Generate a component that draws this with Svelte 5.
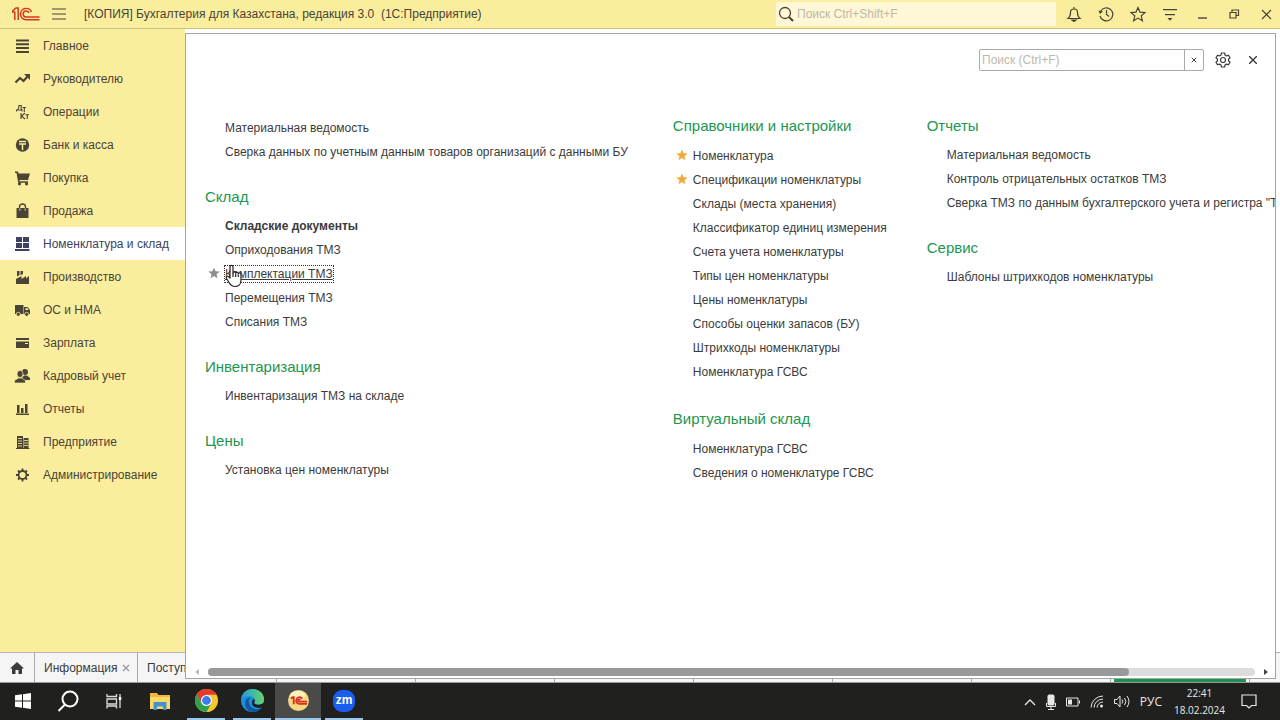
<script lang="ts">
  type Item = { text: string; bold?: boolean; star?: boolean; hover?: boolean };
  type Group = { title?: string; items: Item[] };

  const sections = [
    { name: 'Главное', icon: '<path d="M2 1.500h13v2H2zM2 5.300h13v2H2zM2 9.100h13v2H2zM2 13h13v2H2z"/>' },
    { name: 'Руководителю', icon: '<path d="M1.500 11.500L6 7l3.500 3L14 5" fill="none" stroke="currentColor" stroke-width="2.200"/><path d="M10 3h6v6z"/>' },
    { name: 'Операции', icon: '<g fill="none" stroke="currentColor" stroke-width="1.100"><path d="M2.500 7.500V6h5.500v1.500M3.500 6Q5 4 5 1.500h2.200V6M8.500 3.500h3.500M10.300 3.500V8" /><path d="M7 9v6M11 9L7.500 12 11 15M11.500 10.700h3.500M13.300 10.700V15"/></g>' },
    { name: 'Банк и касса', icon: '<circle cx="8.500" cy="8" r="6.700"/><path d="M5 4.500h7M5 7h7M8.500 7v6" stroke="#fbed9e" stroke-width="1.500"/>' },
    { name: 'Покупка', icon: '<path d="M1 1.500h3l.6 2H16L14 10H5.300l.3 1.200H14v1.500H4.200L2.500 3H1z"/><circle cx="5.500" cy="13.800" r="1.600"/><circle cx="12.500" cy="13.800" r="1.600"/>' },
    { name: 'Продажа', icon: '<path d="M2.500 5h12v10h-12z"/><path d="M5.500 8V4a3 3 0 0 1 6 0v4" fill="none" stroke="currentColor" stroke-width="1.300"/><path d="M5.800 5.500v2M11.200 5.500v2" stroke="#fbed9e"/>' },
    { name: 'Номенклатура и склад', icon: '<path d="M2 1h6v5H2zM9 1h6v5H9zM2 7h6v5H2zM9 7h6v5H9zM1 13h14.500v2H1z"/>', active: true },
    { name: 'Производство', icon: '<path d="M2 15V10l5.500-3v3L12 7v2.500L15 7v8zM3 2h2.500v4L3 7.500zM6.500 2H9v3L6.500 6.300z"/>' },
    { name: 'ОС и НМА', icon: '<path d="M1 3h8.500v9H1zM10 5h3.500L16 8v4h-6z"/><circle cx="4.300" cy="12.300" r="2" stroke="#fbed9e" stroke-width=".8"/><circle cx="12.700" cy="12.300" r="2" stroke="#fbed9e" stroke-width=".8"/><path d="M11.500 6.300h2l1.200 1.800h-3.200z" fill="#fbed9e"/>' },
    { name: 'Зарплата', icon: '<path d="M2 3h13v2H2zM2 6.500h13V13H2z"/><path d="M11 8.500h3" stroke="#fbed9e"/>' },
    { name: 'Кадровый учет', icon: '<circle cx="11" cy="4" r="3"/><path d="M8 10l2-2.500h3l3 2.500v2H9z"/><g stroke="#fbed9e" stroke-width=".7"><ellipse cx="6" cy="6" rx="3" ry="3.600"/><path d="M.5 15v-2.500L4.500 10h3l4 2.500V15z"/></g>' },
    { name: 'Отчеты', icon: '<path d="M3 4h2.500v8H3zM7 7h2.500v5H7zM11 3h2.500v9H11zM2 12.500h13V14H2z"/>' },
    { name: 'Предприятие', icon: '<path d="M3 2h6v12H3zM9.500 4h5v10h-5zM2 14h13.500v1H2z"/><path d="M4 4.500h4M4 7h4M4 9.500h4M4 12h4M10 6.500h4M10 9h4M10 11.500h4" stroke="#fbed9e" stroke-width=".8"/>' },
    { name: 'Администрирование', icon: '<circle cx="8.500" cy="8" r="4" fill="none" stroke="currentColor" stroke-width="1.800"/><path d="M8.500 1.500v3M8.500 11.500v3M2 8h3M12 8h3M4 3.500l2 2M11 10.500l2 2M13 3.500l-2 2M6 10.500l-2 2" stroke="currentColor" stroke-width="1.800"/>' }
  ];

  const columns: Group[][] = [
    [
      { items: [{ text: 'Материальная ведомость' }, { text: 'Сверка данных по учетным данным товаров организаций с данными БУ' }] },
      {
        title: 'Склад',
        items: [
          { text: 'Складские документы', bold: true },
          { text: 'Оприходования ТМЗ' },
          { text: 'Комплектации ТМЗ', star: true, hover: true },
          { text: 'Перемещения ТМЗ' },
          { text: 'Списания ТМЗ' }
        ]
      },
      { title: 'Инвентаризация', items: [{ text: 'Инвентаризация ТМЗ на складе' }] },
      { title: 'Цены', items: [{ text: 'Установка цен номенклатуры' }] }
    ],
    [
      {
        title: 'Справочники и настройки',
        items: [
          { text: 'Номенклатура', star: true },
          { text: 'Спецификации номенклатуры', star: true },
          { text: 'Склады (места хранения)' },
          { text: 'Классификатор единиц измерения' },
          { text: 'Счета учета номенклатуры' },
          { text: 'Типы цен номенклатуры' },
          { text: 'Цены номенклатуры' },
          { text: 'Способы оценки запасов (БУ)' },
          { text: 'Штрихкоды номенклатуры' },
          { text: 'Номенклатура ГСВС' }
        ]
      },
      { title: 'Виртуальный склад', items: [{ text: 'Номенклатура ГСВС' }, { text: 'Сведения о номенклатуре ГСВС' }] }
    ],
    [
      {
        title: 'Отчеты',
        items: [
          { text: 'Материальная ведомость' },
          { text: 'Контроль отрицательных остатков ТМЗ' },
          { text: 'Сверка ТМЗ по данным бухгалтерского учета и регистра "Т' }
        ]
      },
      { title: 'Сервис', items: [{ text: 'Шаблоны штрихкодов номенклатуры' }] }
    ]
  ];

  let globalSearch = $state('');
  let menuSearch = $state('');
</script>

<div class="screen">
  <header class="titlebar">
    <svg class="logo" viewBox="0 0 28 14" width="28" height="14" fill="none" stroke="#d4381c" stroke-width="1.500">
      <path d="M0 5h3M2.800 4.500V13M0 4.500L4 1h2.200v12" />
      <path d="M19.500 5A5.700 5.700 0 1 0 14 12.800h13.500" />
      <path d="M17 6A3 3 0 1 0 14 10h13.500" />
    </svg>
    <button class="plain" aria-label="Меню">
      <svg viewBox="0 0 14 14" width="14" height="14" stroke="currentColor" stroke-width="1.200"><path d="M0 2h14M0 7h14M0 12h14" /></svg>
    </button>
    <h1>[КОПИЯ] Бухгалтерия для Казахстана, редакция 3.0&nbsp; (1С:Предприятие)</h1>
    <label class="global-search">
      <svg viewBox="0 0 16 16" width="16" height="16" fill="none" stroke="currentColor"><circle cx="7" cy="7" r="5.500" stroke-width="1.300" /><path d="M11 11l4 4" stroke-width="2.200" /></svg>
      <input type="text" placeholder="Поиск Ctrl+Shift+F" aria-label="Поиск" bind:value={globalSearch} />
    </label>
    <div class="tools">
      <button class="plain" aria-label="Уведомления">
        <svg viewBox="0 0 16 16" width="16" height="16" fill="none" stroke="currentColor" stroke-width="1.200"><path d="M2 12.500c2-1.500 2.500-3.500 2.500-6 0-2.300 1.500-3.500 3.500-3.500s3.500 1.200 3.500 3.500c0 2.500.5 4.500 2.500 6zM8 1v2" /><path d="M6 14h4l-2 1.500z" fill="currentColor" /></svg>
      </button>
      <button class="plain" aria-label="История">
        <svg viewBox="0 0 16 16" width="16" height="16" fill="none" stroke="currentColor" stroke-width="1.200"><path d="M2.500 5.500A6.500 6.500 0 1 1 2 10M8.500 4v4.500l2.500 2" /><path d="M.5 4.500L5 5.500 2 8z" fill="currentColor" stroke="none" /></svg>
      </button>
      <button class="plain" aria-label="Избранное">
        <svg viewBox="0 0 16 16" width="16" height="16" fill="none" stroke="currentColor" stroke-width="1.200"><path d="M8 1.500l2 4.600 5 .5-3.800 3.200 1.200 4.900L8 12.100l-4.400 2.600 1.200-4.900L1 6.600l5-.5z" /></svg>
      </button>
      <button class="plain" aria-label="Сервис">
        <svg viewBox="0 0 16 16" width="16" height="16" fill="currentColor"><path d="M1 3h14v1.200H1zM3 8h10v1.200H3zM5.500 12h5L8 14.800z" /></svg>
      </button>
      <button class="plain" aria-label="Свернуть">
        <svg viewBox="0 0 16 16" width="16" height="16"><path d="M4 12h9" stroke="currentColor" stroke-width="1.400" /></svg>
      </button>
      <button class="plain" aria-label="Восстановить">
        <svg viewBox="0 0 16 16" width="16" height="16" fill="none" stroke="currentColor" stroke-width="1.200"><path d="M4 6.500h6V12H4zM6 6.500V4h6.500v5.500H10" /></svg>
      </button>
      <button class="plain" aria-label="Закрыть">
        <svg viewBox="0 0 16 16" width="16" height="16" stroke="currentColor" stroke-width="1.200"><path d="M4 4l9 9M13 4l-9 9" /></svg>
      </button>
    </div>
  </header>

  <div class="workspace">
    <nav class="sidebar">
      {#each sections as section}
        <a href="#section" class:active={section.active}>
          <svg viewBox="0 0 17 16" width="17" height="16" fill="currentColor">{@html section.icon}</svg>
          {section.name}
        </a>
      {/each}
    </nav>

    <div class="tabs">
      <button class="home" aria-label="Начальная страница">
        <svg viewBox="0 0 14 12" width="14" height="12" fill="currentColor"><path d="M7 0l7 6.500h-2V12H8.500V8h-3v4H2V6.500H0z" /></svg>
      </button>
      <button class="tab info">
        Информация
        <svg viewBox="0 0 8 8" width="8" height="8" stroke="#9a9a9a" stroke-width="1.300"><path d="M1 1l6 6M7 1L1 7" /></svg>
      </button>
      <button class="tab">Поступления</button>
      {#each Array(7) as _, i}
        <span class="tab" class:current={i === 6}></span>
      {/each}
    </div>

    <main class="panel">
      <div class="panel-tools">
        <div class="menu-search">
          <input type="text" placeholder="Поиск (Ctrl+F)" aria-label="Поиск в меню" bind:value={menuSearch} />
          <button aria-label="Очистить" onclick={() => (menuSearch = '')}>
            <svg viewBox="0 0 8 8" width="6" height="6" stroke="currentColor" stroke-width="1.300"><path d="M1 1l6 6M7 1L1 7" /></svg>
          </button>
        </div>
        <button class="plain" aria-label="Настройки">
          <svg viewBox="0 0 16 16" width="16" height="16" fill="none" stroke="currentColor" stroke-width="1.200" stroke-linejoin="round"><path d="M6.500 1h3l.5 2 1.500.9 2-.7 1.500 2.600L13.500 7.200v1.600L15 10.200l-1.500 2.600-2-.7L10 13l-.5 2h-3L6 13l-1.500-.9-2 .7L1 10.200l1.500-1.400V7.200L1 5.800l1.500-2.600 2 .7L6 3z" /><circle cx="8" cy="8" r="2.500" /></svg>
        </button>
        <button class="plain" aria-label="Закрыть меню">
          <svg viewBox="0 0 8 8" width="8" height="8" stroke="currentColor" stroke-width="1.400"><path d="M0 0l8 8M8 0L0 8" /></svg>
        </button>
      </div>

      <div class="columns">
        {#each columns as groups}
          <div class="column">
            {#each groups as group}
              <section>
                {#if group.title}<h2>{group.title}</h2>{/if}
                <ul>
                  {#each group.items as item}
                    <li class:bold={item.bold} class:hover={item.hover}>
                      {#if item.star}
                        <svg class="star" viewBox="0 0 12 12" width="12" height="12" fill="currentColor"><path d="M6 .5l1.600 3.800 4.100.3-3.200 2.700 1 4L6 9.100l-3.500 2.200 1-4L.3 4.600l4.100-.3z" /></svg>
                      {/if}
                      <a href="#command">{item.text}</a>
                      {#if item.hover}
                        <svg class="pointer" viewBox="0 0 18 24" width="18" height="24" fill="#fff" stroke="#222" stroke-width="1.200" stroke-linejoin="round"><path d="M5 14V3c0-2.200 3-2.200 3 0v6c0-1.500 2.700-1.500 2.700.3 0-1.500 2.600-1.300 2.600.5 0-1.300 2.700-1.200 2.700.7V16c0 4-2.500 6.500-6 6.500-3.300 0-4.500-1.500-6-4l-2.600-4.300c-.8-1.700 1.200-2.500 2.200-1.400z" /><path d="M8 9v4M10.700 10v3M13.300 10.500V13" /></svg>
                      {/if}
                    </li>
                  {/each}
                </ul>
              </section>
            {/each}
          </div>
        {/each}
      </div>

      <div class="scrollbar">
        <svg viewBox="0 0 4 6" width="4" height="6" fill="#bbb"><path d="M4 0v6L0 3z" /></svg>
        <div class="track"><div class="thumb"></div></div>
        <svg viewBox="0 0 4 6" width="4" height="6" fill="#444"><path d="M0 0v6l4-3z" /></svg>
      </div>
    </main>
  </div>

  <footer class="taskbar">
    <button aria-label="Пуск">
      <svg viewBox="0 0 16 16" width="16" height="16" fill="#fff"><path d="M0 2.300l7-1v6.200H0zM8 1.200L16 0v7.500H8zM0 8.500h7v6.200l-7-1zM8 8.500h8V16l-8-1.200z" /></svg>
    </button>
    <button aria-label="Поиск">
      <svg viewBox="0 0 22 22" width="22" height="22" fill="none" stroke="#fff" stroke-width="2"><circle cx="13" cy="9" r="7.500" /><path d="M8 14.500L1.500 21" /></svg>
    </button>
    <button aria-label="Представление задач">
      <svg viewBox="0 0 16 16" width="16" height="16" fill="none" stroke="#ddd" stroke-width="1.300"><path d="M1 1v2.500h9.500V1M1 6h9.500v5H1zM1 15.500V13h9.500v2.500M14 1v14" /><path d="M12.800 4h2.500v3h-2.500z" fill="#fff" stroke="none" /></svg>
    </button>
    <button aria-label="Проводник">
      <svg viewBox="0 0 20 18" width="20" height="18"><path d="M0 1h7l1.500 2H20v14H0z" fill="#f0b73c" /><path d="M0 5h20v12H0z" fill="#fbd766" /><path d="M3.500 10h13v8H13v-3.500H7V18H3.500z" fill="#3f94cf" /></svg>
    </button>
    <button class="running" aria-label="Chrome">
      <svg viewBox="0 0 22 22" width="23" height="23"><circle cx="11" cy="11" r="11" fill="#fbc52d" /><path d="M1.470 5.500A11 11 0 0 1 20.530 5.500H11L6.200 13.700z" fill="#e33b2e" /><path d="M1.470 5.500A11 11 0 0 0 11 22l4.800-8.300H6.200z" fill="#2ba24c" /><circle cx="11" cy="11" r="5.300" fill="#fff" /><circle cx="11" cy="11" r="4.200" fill="#3b7ded" /></svg>
    </button>
    <button class="running" aria-label="Edge">
      <svg viewBox="0 0 22 22" width="23" height="23">
        <defs><linearGradient id="edge"><stop stop-color="#2499dc" /><stop offset="1" stop-color="#62d66b" /></linearGradient></defs>
        <circle cx="11" cy="11" r="11" fill="#1b8fdc" />
        <path d="M0 10C1 4 5.500 0 11 0c6 0 11 4.500 11 9.500 0 3.500-2.500 5.500-5.500 5.500-2.500 0-4-1-4-2 1.500-1 1.500-5-3-6C5.500 6.500 1 7.500 0 10z" fill="url(#edge)" />
        <path d="M12.500 13c0 1 1.500 2 4 2 2 0 4-.7 5.500-2v3c-1.500 1.500-3 2-5 2-4 0-6.500-2-6.500-4.500 0-1.500.5-3 1.500-4 2 1 1.200 2.500.5 3.500z" fill="#20211f" />
        <path d="M9.500 8c-3 2-3 8 2 10.500 2.500 1.200 6 1 8-.5C17.500 20.500 14 22 11 22c-4.500-.5-7-4-7-8s2.500-6 5.500-6z" fill="#14559f" />
      </svg>
    </button>
    <button class="running focused" aria-label="1С:Предприятие">
      <svg viewBox="0 0 22 22" width="21" height="21"><circle cx="11" cy="11" r="11" fill="#f8d783" /><ellipse cx="10" cy="6" rx="8" ry="5" fill="#fff0bf" /><path d="M3 9l2-1.500h1V15M15 9a3.500 3.500 0 1 0-3 5.500h8M13 10.300a1.200 1.200 0 1 0-1 1.900h8" fill="none" stroke="#d5321c" stroke-width="2" /></svg>
    </button>
    <button class="running" aria-label="Zoom"><span class="zoom">zm</span></button>

    <div class="tray">
      <svg viewBox="0 0 12 8" width="12" height="8" fill="none" stroke="currentColor" stroke-width="1.300"><path d="M1 7l5-5 5 5" /></svg>
      <svg viewBox="0 0 10 16" width="10" height="16" fill="none" stroke="currentColor"><rect x="2" y="1" width="6" height="10" rx="1" fill="currentColor" /><path d="M.5 9v3.500h9V9M5 13v2.500M2 15.500h6" /></svg>
      <svg viewBox="0 0 14 10" width="14" height="10" fill="none" stroke="currentColor"><path d="M.5 1h11.500v8H.5zM13.500 3.500v3" /><path d="M2 2.500h4v5H2z" fill="currentColor" stroke="none" /></svg>
      <svg viewBox="0 0 14 13" width="14" height="13" fill="none" stroke="currentColor"><path d="M1 12.500A12 12 0 0 1 13 1M4 12.500A9 9 0 0 1 13 4M7 12.500A6 6 0 0 1 13 7" /><circle cx="11.500" cy="11" r="1.500" fill="currentColor" stroke="none" /></svg>
      <svg viewBox="0 0 16 13" width="16" height="13" fill="none" stroke="currentColor"><path d="M.5 4.500H3l3-3.500v11L3 8.500H.5zM8 4.500q1.500 2 0 4M10.500 3q2.800 3.500 0 7M13 1q4 5.500 0 11" /></svg>
      <span class="lang">РУС</span>
      <time datetime="2024-02-18T22:41">22:41<br />18.02.2024</time>
      <svg viewBox="0 0 16 15" width="16" height="15" fill="none" stroke="currentColor" stroke-width="1.200"><path d="M1 1h14v10.500h-4.500L8 14l-2.500-2.500H1z" /></svg>
    </div>
  </footer>
</div>

<style>
  :global(body) {
    margin: 0;
  }

  .screen {
    min-height: 100vh;
    display: flex;
    flex-direction: column;
    overflow: hidden;
    font-family: 'Liberation Sans', Arial, sans-serif;
    font-size: 12px;
    color: #3b3b3b;
  }

  button,
  input {
    font: inherit;
    color: inherit;
    border: 0;
    padding: 0;
    background: none;
  }

  svg {
    flex-shrink: 0;
  }

  a {
    color: inherit;
    text-decoration: none;
  }

  .plain {
    display: flex;
  }

  .titlebar {
    display: flex;
    align-items: center;
    height: 28px;
    padding: 0 6px 0 12px;
    background: #fbed9e;
    border-bottom: 1px solid #cfc07c;
    color: #4a4434;
  }

  .logo {
    margin-right: 12px;
  }

  h1 {
    flex: 1;
    margin: 0 0 0 18px;
    font-size: 12px;
    font-weight: 400;
    white-space: nowrap;
  }

  .global-search {
    display: flex;
    align-items: center;
    gap: 3px;
    width: 278px;
    height: 24px;
    padding-left: 2px;
    margin-right: 10px;
    background: #fff7d5;
    border-radius: 2px;
  }

  .global-search input {
    flex: 1;
    min-width: 0;
  }

  input::placeholder {
    color: #bdb9aa;
    opacity: 1;
  }

  .tools {
    display: flex;
    gap: 16px;
  }

  .workspace {
    position: relative;
    flex: 1;
    display: flex;
    flex-direction: column;
  }

  .sidebar {
    flex: 1;
    box-sizing: border-box;
    width: 185px;
    background: #fbed9e;
    color: #4a4434;
  }

  .sidebar a {
    display: flex;
    align-items: center;
    gap: 12px;
    height: 33px;
    padding-left: 14px;
    white-space: nowrap;
  }

  .sidebar .active {
    background: #fff;
    color: #3d4260;
  }

  .tabs {
    display: flex;
    height: 29px;
    background: #f5f5f5;
    border-top: 1px solid #b5b5b5;
    border-bottom: 1px solid #999;
    overflow: hidden;
  }

  .home {
    display: flex;
    align-items: center;
    justify-content: center;
    width: 35px;
    border-right: 1px solid #aaa;
  }

  .tab {
    flex: none;
    box-sizing: border-box;
    display: flex;
    align-items: center;
    justify-content: space-between;
    width: 139px;
    padding: 0 7px 0 9px;
    border-right: 1px solid #aaa;
  }

  .info {
    width: 103px;
  }

  .current {
    padding: 0 3px;
    background: linear-gradient(#1c9150, #1c9150) bottom / 100% 3px no-repeat content-box;
  }

  .panel {
    position: absolute;
    inset: 4px 4px 4px 185px;
    box-sizing: border-box;
    display: flex;
    flex-direction: column;
    background: #fff;
    border: 1px solid #a5a5a5;
    overflow: hidden;
  }

  .panel-tools {
    display: flex;
    align-items: center;
    justify-content: flex-end;
    gap: 18px;
    padding: 15px 18px 0 0;
  }

  .menu-search {
    display: flex;
    box-sizing: border-box;
    width: 225px;
    height: 22px;
    margin-right: -7px;
    border: 1px solid #aaa;
    border-radius: 2px;
  }

  .menu-search input {
    flex: 1;
    min-width: 0;
    padding-left: 2px;
  }

  .menu-search button {
    display: flex;
    align-items: center;
    justify-content: center;
    width: 19px;
    border-left: 1px solid #aaa;
  }

  .columns {
    flex: 1;
    display: flex;
    gap: 40px;
    padding: 43px 0 0 19px;
    white-space: nowrap;
  }

  .column {
    flex: none;
    display: flex;
    flex-direction: column;
    gap: 21px;
  }

  .column:first-child {
    padding-right: 5px;
  }

  .column:nth-child(2) {
    gap: 23px;
  }

  h2 {
    margin: 0 0 5px;
    font-size: 15px;
    line-height: 24px;
    font-weight: 400;
    color: #21964f;
  }

  .column:nth-child(2) h2 {
    margin-bottom: 6px;
  }

  ul {
    list-style: none;
    margin: 0;
    padding: 0 0 0 20px;
  }

  section > ul:first-child {
    padding-top: 2px;
  }

  li {
    position: relative;
    line-height: 24px;
  }

  .bold {
    font-weight: 700;
  }

  .star {
    position: absolute;
    left: -17px;
    top: 5px;
    color: #f2a93b;
  }

  .hover .star {
    color: #8d8d8d;
  }

  .hover a {
    padding: 1px 0;
    text-decoration: underline;
    outline: 1px dotted #333;
  }

  .pointer {
    position: absolute;
    left: 0;
    top: 2px;
  }

  .scrollbar {
    display: flex;
    align-items: center;
    gap: 9px;
    height: 13px;
    padding: 0 7px 0 9px;
  }

  .track {
    flex: 1;
    height: 8px;
    border-radius: 4px;
    background: #dcdcdc;
  }

  .thumb {
    width: 88%;
    height: 8px;
    border-radius: 4px;
    background: #999;
  }

  .taskbar {
    display: flex;
    height: 37px;
    background: #20211f;
    color: #e8e8e8;
  }

  .taskbar button {
    box-sizing: border-box;
    display: flex;
    align-items: center;
    justify-content: center;
    width: 46px;
    border-bottom: 2px solid transparent;
  }

  .taskbar button:first-child {
    width: 45px;
  }

  .taskbar .running {
    padding: 0 4px;
    background: linear-gradient(#9cc8ee, #9cc8ee) bottom / 38px 2px no-repeat border-box;
  }

  .taskbar .focused {
    background: #4a4a48;
    border-color: #9cc8ee;
  }

  .zoom {
    width: 22px;
    height: 22px;
    border-radius: 9px;
    background: #1b5df0;
    color: #fff;
    font-size: 12px;
    line-height: 20px;
    font-weight: 700;
  }

  .tray {
    display: flex;
    align-items: center;
    gap: 10px;
    margin-left: auto;
    padding-right: 23px;
    font-family: 'Open Sans', 'Noto Sans', sans-serif;
  }

  .lang {
    margin-right: 2px;
  }

  time {
    margin-right: 6px;
    font-size: 10px;
    line-height: 17px;
    text-align: center;
  }
</style>
